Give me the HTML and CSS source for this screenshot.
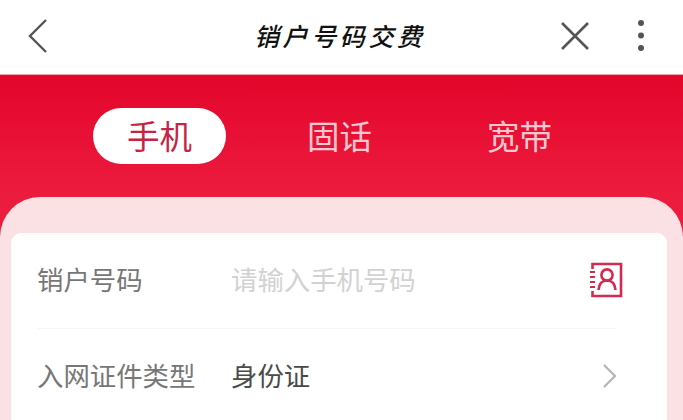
FILE: index.html
```html
<!DOCTYPE html>
<html lang="zh-CN">
<head>
    <meta charset="UTF-8">
    <meta name="viewport" content="width=device-width, initial-scale=1.0">
    <title>销户号码交费</title>
    <link rel="stylesheet" href="styles.css">
</head>
<body>
    <header class="top-bar">
        <svg class="icon-back" width="24" height="38" viewBox="0 0 24 38">
            <path d="M19 3 L3 19 L19 35" fill="none" stroke="#555" stroke-width="2.4"/>
        </svg>
        <h1 class="page-title">销户号码交费</h1>
        <div class="top-actions">
            <svg width="30" height="30" viewBox="0 0 30 30">
                <path d="M2 2 L28 28 M28 2 L2 28" fill="none" stroke="#555" stroke-width="2.6"/>
            </svg>
            <svg width="10" height="34" viewBox="0 0 10 34">
                <circle cx="5" cy="4" r="3" fill="#555"/>
                <circle cx="5" cy="16.5" r="3" fill="#555"/>
                <circle cx="5" cy="29" r="3" fill="#555"/>
            </svg>
        </div>
    </header>

    <main class="red-area">
        <nav class="tabs">
            <a class="tab active">手机</a>
            <a class="tab">固话</a>
            <a class="tab">宽带</a>
        </nav>
        <section class="panel">
            <div class="card">
                <div class="form-row">
                    <span class="form-label">销户号码</span>
                    <span class="form-value placeholder">请输入手机号码</span>
                    <svg class="icon-contact" width="34" height="36" viewBox="0 0 34 36">
                        <path d="M3.5 7 V2 H32 V34 H3.5 V29" fill="none" stroke="#d42a50" stroke-width="2.6"/>
                        <path d="M1 10 H6 M1 15 H6 M1 20 H6 M1 25 H6" fill="none" stroke="#d42a50" stroke-width="2"/>
                        <circle cx="18" cy="13" r="5.6" fill="none" stroke="#d42a50" stroke-width="2.6"/>
                        <path d="M9.5 28 C10 22 13 18.5 18 18.5 C23 18.5 26 22 26.5 28" fill="none" stroke="#d42a50" stroke-width="2.6"/>
                    </svg>
                </div>
                <div class="form-row">
                    <span class="form-label">入网证件类型</span>
                    <span class="form-value">身份证</span>
                    <svg class="icon-more" width="16" height="26" viewBox="0 0 16 26">
                        <path d="M2 2 L13 13 L2 24" fill="none" stroke="#b5b5b5" stroke-width="2.2"/>
                    </svg>
                </div>
            </div>
        </section>
    </main>
</body>
</html>
```

FILE: styles.css
```css
html, body {
    margin: 0;
    height: 100%;
    overflow: hidden;
}

body {
    font-family: "Noto Sans CJK SC", "Liberation Sans", sans-serif;
    background: #ec1c3e;
}

.top-bar {
    height: 71px;
    background: #fff;
    border-bottom: 1px solid #f3a3ae;
    display: flex;
    align-items: center;
    justify-content: space-between;
    padding: 0 37px 3px 27px;
    position: relative;
}

.page-title {
    position: absolute;
    left: 254px;
    top: 17px;
    margin: 0;
    font-size: 25px;
    line-height: 36px;
    font-weight: 500;
    font-style: italic;
    letter-spacing: 3.6px;
    color: #111;
}

.top-actions {
    display: flex;
    align-items: center;
    gap: 46px;
}

.red-area {
    background: linear-gradient(to bottom, #e4052b, #ec1c3e 120px);
    padding-top: 33px;
}

.tabs {
    display: flex;
    gap: 47px;
    padding-left: 93px;
    height: 56px;
}

.tab {
    width: 133px;
    height: 56px;
    line-height: 54px;
    border-radius: 28px;
    text-align: center;
    font-size: 32.5px;
    color: #f9c7d0;
}

.tab.active {
    background: #fff;
    color: #c42545;
}

.panel {
    margin-top: 33px;
    height: 187px;
    padding: 36px 16px 0 11px;
    background: #fbe0e4;
    border-radius: 40px 40px 0 0;
}

.card {
    background: #fff;
    border-radius: 10px 10px 0 0;
    height: 100%;
    padding: 0 50px 0 27px;
}

.form-row {
    height: 95px;
    display: flex;
    align-items: center;
}

.form-row:first-child {
    border-bottom: 1px solid #f5f5f5;
}

.form-label {
    width: 194px;
    margin-left: -1px;
    margin-top: -4px;
    font-size: 26.4px;
    color: #777;
}

.form-value {
    flex: 1;
    margin-top: -4px;
    font-size: 26.4px;
    color: #4a4a4a;
}

.placeholder {
    color: #d2d2d2;
}

.icon-contact {
    margin-right: -6px;
    margin-top: -1px;
}

.icon-more {
    margin-right: -1px;
    margin-top: -2px;
}
```
